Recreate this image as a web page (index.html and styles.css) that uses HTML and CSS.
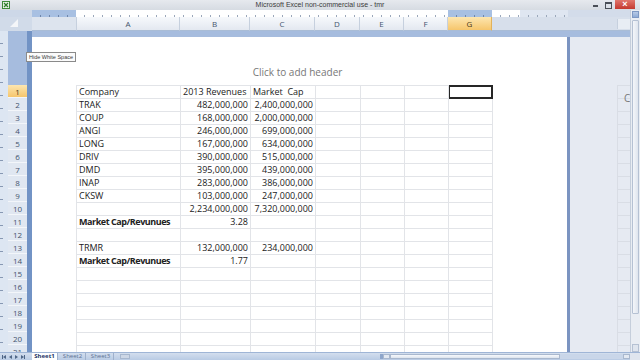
FILE: index.html
```html
<!DOCTYPE html>
<html lang="en">
<head>
    <meta charset="UTF-8">
    <title>Microsoft Excel non-commercial use - tmr</title>
    <link rel="stylesheet" href="styles.css">
</head>
<body>
<div class="window">
    <div class="titlebar">
        <div class="app-icon">
            <svg width="8" height="8" viewBox="0 0 8 8">
                <rect x="0.5" y="0.5" width="7" height="7" fill="#e9f3e6" stroke="#3f8a3a"/>
                <path d="M2 2 L6 6 M6 2 L2 6" stroke="#2f7a2c" stroke-width="1.2"/>
            </svg>
        </div>
        <div class="title">Microsoft Excel non-commercial use - tmr</div>
        <div class="controls">
            <span class="ctl min"></span>
            <span class="ctl max"></span>
            <span class="ctl close">&times;</span>
        </div>
    </div>

    <div class="body">
        <div class="sheet">
            <div class="ruler-row">
                <div class="rl-left"></div>
                <div class="rl-shade"></div>
                <div class="rl-white"></div>
                <div class="rl-shade"></div>
                <div class="rl-white short"></div>
                <div class="rl-end"></div>
                <div class="rl-rest"></div>
            </div>

            <div class="col-heads">
                <div class="corner"><span class="corner-tri"></span></div>
                <div class="ch-margin"></div>
                <div class="ch col-a">A</div>
                <div class="ch col-b">B</div>
                <div class="ch col-c">C</div>
                <div class="ch col-d">D</div>
                <div class="ch col-e">E</div>
                <div class="ch col-f">F</div>
                <div class="ch col-g active">G</div>
                <div class="ch-rest"><div class="ch-next"></div></div>
            </div>

            <div class="work">
                <div class="vruler"></div>
                <div class="rowheads">
                    <div class="rh-top"></div>
                    <div class="rh active">1</div>
                    <div class="rh">2</div>
                    <div class="rh">3</div>
                    <div class="rh">4</div>
                    <div class="rh">5</div>
                    <div class="rh">6</div>
                    <div class="rh">7</div>
                    <div class="rh">8</div>
                    <div class="rh">9</div>
                    <div class="rh">10</div>
                    <div class="rh">11</div>
                    <div class="rh">12</div>
                    <div class="rh">13</div>
                    <div class="rh">14</div>
                    <div class="rh">15</div>
                    <div class="rh">16</div>
                    <div class="rh">17</div>
                    <div class="rh">18</div>
                    <div class="rh">19</div>
                    <div class="rh">20</div>
                    <div class="rh">21</div>
                </div>
                <div class="gutter"></div>

                <div class="pages">
                    <div class="band"></div>
                    <div class="page-row">
                        <div class="page">
                            <div class="page-header">Click to add header</div>
                            <table class="grid">
                                <colgroup>
                                    <col class="w-a"><col class="w-b"><col class="w-c"><col class="w-d"><col class="w-e"><col class="w-f"><col class="w-g">
                                </colgroup>
                                <tbody>
                                    <tr><td>Company</td><td>2013 Revenues</td><td class="pre">Market  Cap</td><td></td><td></td><td></td><td class="sel"></td></tr>
                                    <tr><td>TRAK</td><td class="num">482,000,000</td><td class="num">2,400,000,000</td><td></td><td></td><td></td><td></td></tr>
                                    <tr><td>COUP</td><td class="num">168,000,000</td><td class="num">2,000,000,000</td><td></td><td></td><td></td><td></td></tr>
                                    <tr><td>ANGI</td><td class="num">246,000,000</td><td class="num">699,000,000</td><td></td><td></td><td></td><td></td></tr>
                                    <tr><td>LONG</td><td class="num">167,000,000</td><td class="num">634,000,000</td><td></td><td></td><td></td><td></td></tr>
                                    <tr><td>DRIV</td><td class="num">390,000,000</td><td class="num">515,000,000</td><td></td><td></td><td></td><td></td></tr>
                                    <tr><td>DMD</td><td class="num">395,000,000</td><td class="num">439,000,000</td><td></td><td></td><td></td><td></td></tr>
                                    <tr><td>INAP</td><td class="num">283,000,000</td><td class="num">386,000,000</td><td></td><td></td><td></td><td></td></tr>
                                    <tr><td>CKSW</td><td class="num">103,000,000</td><td class="num">247,000,000</td><td></td><td></td><td></td><td></td></tr>
                                    <tr><td></td><td class="num">2,234,000,000</td><td class="num">7,320,000,000</td><td></td><td></td><td></td><td></td></tr>
                                    <tr><td class="bold">Market Cap/Revunues</td><td class="num">3.28</td><td></td><td></td><td></td><td></td><td></td></tr>
                                    <tr><td></td><td></td><td></td><td></td><td></td><td></td><td></td></tr>
                                    <tr><td>TRMR</td><td class="num">132,000,000</td><td class="num">234,000,000</td><td></td><td></td><td></td><td></td></tr>
                                    <tr><td class="bold">Market Cap/Revunues</td><td class="num">1.77</td><td></td><td></td><td></td><td></td><td></td></tr>
                                    <tr><td></td><td></td><td></td><td></td><td></td><td></td><td></td></tr>
                                    <tr><td></td><td></td><td></td><td></td><td></td><td></td><td></td></tr>
                                    <tr><td></td><td></td><td></td><td></td><td></td><td></td><td></td></tr>
                                    <tr><td></td><td></td><td></td><td></td><td></td><td></td><td></td></tr>
                                    <tr><td></td><td></td><td></td><td></td><td></td><td></td><td></td></tr>
                                    <tr><td></td><td></td><td></td><td></td><td></td><td></td><td></td></tr>
                                    <tr><td></td><td></td><td></td><td></td><td></td><td></td><td></td></tr>
                                </tbody>
                            </table>
                        </div>
                        <div class="page-edge"></div>
                        <div class="page-gap">
                            <div class="page2"><span class="page2-text">C</span></div>
                        </div>
                    </div>
                </div>

                <!-- tooltip sits over the sheet -->
                <div class="tooltip">Hide White Space</div>
            </div>
        </div>

        <div class="vscroll">
            <div class="vs-top"></div>
            <div class="vs-thumb"></div>
            <div class="vs-track"></div>
            <div class="vs-down"></div>
        </div>
    </div>

    <div class="tabbar">
        <div class="tab-nav">
            <span class="nav-arrow left first"></span>
            <span class="nav-arrow left"></span>
            <span class="nav-arrow right"></span>
            <span class="nav-arrow right last"></span>
        </div>
        <div class="tab current">Sheet1</div>
        <div class="tab">Sheet2</div>
        <div class="tab">Sheet3</div>
        <div class="tab-add"></div>
        <div class="tab-space"></div>
        <div class="hscroll">
            <div class="hs-split"></div>
            <div class="hs-btn"></div>
            <div class="hs-thumb"></div>
            <div class="hs-track"></div>
            <div class="hs-btn"></div>
        </div>
        <div class="tab-corner"></div>
    </div>
</div>
</body>
</html>
```

FILE: styles.css
```css
* {
    box-sizing: border-box;
}

body {
    margin: 0;
    width: 640px;
    height: 360px;
    overflow: hidden;
    font-family: 'Open Sans', 'Liberation Sans', sans-serif;
    background-color: #ffffff;
}

.window {
    width: 640px;
    height: 360px;
    display: flex;
    flex-direction: column;
}

/* Title bar */
.titlebar {
    height: 10px;
    flex: none;
    display: grid;
    grid-template-columns: 1fr auto 1fr;
    align-items: center;
    background: linear-gradient(#e6e9ee, #d6dbe2);
}

.app-icon {
    display: flex;
    align-items: center;
    padding-left: 2px;
    height: 10px;
}

.title {
    font-family: 'Liberation Sans', sans-serif;
    font-size: 7px;
    color: #3b3b3b;
    line-height: 10px;
}

.controls {
    display: flex;
    justify-content: flex-end;
    align-items: flex-start;
    height: 10px;
    padding-right: 5px;
    gap: 3px;
}

.ctl {
    display: block;
    width: 9px;
    height: 9px;
    position: relative;
}

.ctl.min::after {
    content: '';
    position: absolute;
    left: 2px;
    top: 5px;
    width: 5px;
    height: 2px;
    background-color: #4a4f57;
}

.ctl.max::after {
    content: '';
    position: absolute;
    left: 2px;
    top: 2px;
    width: 5px;
    height: 4px;
    border: 1px solid #4a4f57;
    border-top-width: 2px;
}

.ctl.close {
    width: 20px;
    background: linear-gradient(#e0766c, #c4392f);
    color: #ffffff;
    font-family: 'Liberation Sans', sans-serif;
    font-size: 9px;
    font-weight: bold;
    line-height: 9px;
    text-align: center;
}

/* Body */
.body {
    flex: 1;
    display: flex;
    min-height: 0;
}

.sheet {
    width: 630px;
    display: flex;
    flex-direction: column;
}

/* Horizontal ruler */
.ruler-row {
    height: 7px;
    display: flex;
    background-color: #d3dcea;
}

.rl-left {
    width: 32px;
    background-color: #cdd8e8;
}

.rl-shade {
    width: 44px;
    background: repeating-linear-gradient(to right, transparent 0 8px, #6f86aa 8px 9px) bottom / 100% 2px no-repeat, #a8c0e2;
}

.rl-white {
    width: 372px;
    background: repeating-linear-gradient(to right, transparent 0 8px, #9aa7ba 8px 9px) bottom / 100% 2px no-repeat, #ffffff;
}

.rl-white.short {
    width: 28px;
}

.rl-end {
    width: 48px;
    background: repeating-linear-gradient(to right, transparent 0 8px, #9aa7ba 8px 9px) bottom / 100% 2px no-repeat, #dfe6f1;
}

.rl-rest {
    flex: 1;
}

/* Column headers */
.col-heads {
    height: 14px;
    display: flex;
    background-color: #d7dfeb;
}

.corner {
    width: 32px;
    position: relative;
    background-color: #d1dbe9;
}

.corner-tri {
    position: absolute;
    left: 10px;
    top: 2px;
    width: 0;
    height: 0;
    border-left: 8px solid transparent;
    border-bottom: 8px solid #f4f6f9;
}

.ch-margin {
    width: 44px;
    background-color: #dde4ee;
    border-bottom: 1px solid #a9bcd6;
}

.ch {
    font-size: 8px;
    color: #44546d;
    text-align: center;
    line-height: 14px;
    background: linear-gradient(#f7f9fc, #e3e8f0);
    border-right: 1px solid #c6d0de;
    border-bottom: 1px solid #a9bcd6;
}

.ch.col-a {
    border-left: 1px solid #c6d0de;
}

.ch.active {
    background: linear-gradient(#fde6b0, #f6c66c);
    border-right-color: #e2b25a;
    color: #4a3b1b;
}

.col-a { width: 104px; }
.col-b { width: 70px; }
.col-c { width: 65px; }
.col-d { width: 45px; }
.col-e { width: 44px; }
.col-f { width: 44px; }
.col-g { width: 44px; }

.ch-rest {
    flex: 1;
    display: flex;
    justify-content: flex-end;
    padding: 2px 0 1px;
    border-bottom: 1px solid #a9bcd6;
}

.ch-next {
    width: 13px;
    background-color: #e8edf4;
    border-left: 1px solid #c6d0de;
}

/* Work area */
.work {
    flex: 1;
    display: flex;
    position: relative;
    min-height: 0;
    overflow: hidden;
}

.vruler {
    width: 8px;
    background: repeating-linear-gradient(to bottom, transparent 0 12px, #8798b3 12px 13px) left / 3px 100% no-repeat, #dde6f2;
}

.rowheads {
    width: 19px;
    display: flex;
    flex-direction: column;
    background-color: #dfe6f0;
}

.rh-top {
    height: 54px;
    flex: none;
    background-color: #a6bcde;
}

.rh {
    height: 13px;
    flex: none;
    font-size: 8px;
    line-height: 13px;
    text-align: center;
    color: #44546d;
    background-color: #e0e7f1;
    border-bottom: 1px solid #f3f6fa;
}

.rh.active {
    background: linear-gradient(#fde6b0, #f6c66c);
    color: #4a3b1b;
}

.gutter {
    width: 5px;
    background-color: #7293c5;
}

.pages {
    flex: 1;
    display: flex;
    flex-direction: column;
    background-color: #a6bcde;
}

.band {
    height: 6px;
    flex: none;
}

.page-row {
    flex: 1;
    display: flex;
    min-height: 0;
}

.page {
    width: 535px;
    background-color: #ffffff;
    padding-left: 44px;
    overflow: hidden;
}

.page-header {
    height: 48px;
    display: flex;
    align-items: flex-end;
    justify-content: center;
    padding-bottom: 7px;
    padding-right: 48px;
    font-size: 10px;
    line-height: 12px;
    color: #777777;
}

.grid {
    border-collapse: collapse;
    table-layout: fixed;
    width: 416px;
    font-size: 9px;
    color: #222222;
}

.w-a { width: 104px; }
.w-b { width: 70px; }
.w-c { width: 65px; }
.w-d { width: 45px; }
.w-e { width: 44px; }
.w-f { width: 44px; }
.w-g { width: 44px; }

.grid tr {
    height: 13px;
}

.grid td {
    border: 1px solid #e2e4e8;
    padding: 0 2px;
    line-height: 12px;
    white-space: nowrap;
    overflow: hidden;
}

.grid td.num {
    text-align: right;
}

.grid td.pre {
    white-space: pre;
}

.grid td.bold {
    font-weight: bold;
    letter-spacing: -0.45px;
}

.grid td.sel {
    border: 1px solid #262626;
    box-shadow: inset 0 0 0 1px #262626;
}

.page-edge {
    width: 3px;
    background-color: #7b94c1;
}

.page-gap {
    flex: 1;
    background-color: #e6eaf2;
    display: flex;
    padding-top: 48px;
    padding-left: 47px;
}

.page2 {
    flex: 1;
    position: relative;
    border-left: 1px solid #d9dde5;
    background: repeating-linear-gradient(to bottom, #d9dde5 0 1px, transparent 1px 13px);
}

.page2-text {
    position: absolute;
    left: 6px;
    top: 7px;
    font-size: 10px;
    line-height: 12px;
    color: #777777;
}

.tooltip {
    position: absolute;
    left: 26px;
    top: 21px;
    height: 10px;
    padding: 0 2px;
    background-color: #fbfbfb;
    border: 1px solid #8a8a8a;
    font-family: 'Liberation Sans', sans-serif;
    font-size: 5.5px;
    line-height: 8px;
    color: #3a3a3a;
    white-space: nowrap;
}

/* Vertical scrollbar */
.vscroll {
    width: 10px;
    display: flex;
    flex-direction: column;
    background-color: #e9edf3;
    border-left: 1px solid #c5cedb;
    padding: 0 1px;
}

.vs-top {
    height: 7px;
    margin-top: 1px;
    background: linear-gradient(#b6c9e6, #8eabd6);
    border: 1px solid #7d98c3;
}

.vs-thumb {
    height: 294px;
    margin-top: 2px;
    background: linear-gradient(to right, #f4f6fa, #dfe5ee);
    border: 1px solid #b5c1d3;
    border-radius: 1px;
}

.vs-track {
    flex: 1;
}

.vs-down {
    height: 8px;
    background-color: #dfe5ee;
    border: 1px solid #b5c1d3;
}

/* Sheet tabs and horizontal scrollbar */
.tabbar {
    height: 8px;
    flex: none;
    display: flex;
    align-items: stretch;
    background: linear-gradient(#d3deee, #b9cbe4);
    border-top: 1px solid #9fb5d6;
    font-size: 6px;
}

.tab-nav {
    width: 32px;
    display: flex;
    align-items: center;
    gap: 3px;
    padding-left: 3px;
}

.nav-arrow {
    width: 0;
    height: 0;
    border-top: 2px solid transparent;
    border-bottom: 2px solid transparent;
}

.nav-arrow.left {
    border-right: 3px solid #4f6687;
}

.nav-arrow.right {
    border-left: 3px solid #4f6687;
}

.nav-arrow.first {
    box-shadow: -1px 0 0 #4f6687;
}

.nav-arrow.last {
    box-shadow: 1px 0 0 #4f6687;
}

.tab {
    width: 26px;
    margin-right: 2px;
    text-align: center;
    line-height: 7px;
    color: #5c7192;
    border-right: 1px solid #9fb1cc;
}

.tab.current {
    background-color: #ffffff;
    color: #1d3566;
    font-weight: bold;
}

.tab-add {
    width: 10px;
    margin: 1px 0 1px 4px;
    background-color: #cdd7e6;
    border: 1px solid #a8b8cf;
}

.tab-space {
    flex: 1;
}

.hscroll {
    width: 250px;
    display: flex;
    padding: 1px 0;
}

.hs-split {
    width: 3px;
    background-color: #8ea6cb;
}

.hs-btn {
    width: 7px;
    background-color: #e3e9f2;
    border: 1px solid #a9b8ce;
}

.hs-thumb {
    width: 170px;
    background: linear-gradient(#f7f9fc, #dde4ee);
    border: 1px solid #a9b8ce;
}

.hs-track {
    flex: 1;
    background-color: #c9d6e9;
}

.tab-corner {
    width: 10px;
    background-color: #dfe5ee;
}
```
